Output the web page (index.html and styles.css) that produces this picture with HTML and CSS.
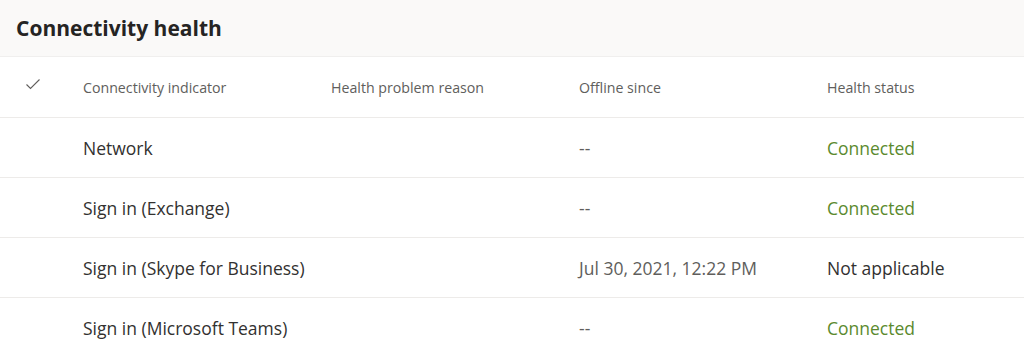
FILE: index.html
```html
<!DOCTYPE html>
<html>
<head>
<meta charset="utf-8">
<link rel="stylesheet" href="styles.css">
</head>
<body>
<div class="panel">
  <div class="title-bar"><h1 class="title">Connectivity health</h1></div>
  <div class="table">
    <div class="row head">
      <div class="cell check">
        <svg width="16" height="16" viewBox="0 0 16 16"><path d="M1.5 8.5 L5.5 12.5 L14.5 3.5" fill="none" stroke="#605e5c" stroke-width="1.1"/></svg>
      </div>
      <div class="cell">Connectivity indicator</div>
      <div class="cell">Health problem reason</div>
      <div class="cell">Offline since</div>
      <div class="cell">Health status</div>
    </div>
    <div class="row">
      <div class="cell check"></div>
      <div class="cell">Network</div>
      <div class="cell"></div>
      <div class="cell muted">--</div>
      <div class="cell ok">Connected</div>
    </div>
    <div class="row">
      <div class="cell check"></div>
      <div class="cell">Sign in (Exchange)</div>
      <div class="cell"></div>
      <div class="cell muted">--</div>
      <div class="cell ok">Connected</div>
    </div>
    <div class="row">
      <div class="cell check"></div>
      <div class="cell">Sign in (Skype for Business)</div>
      <div class="cell"></div>
      <div class="cell muted">Jul 30, 2021, 12:22 PM</div>
      <div class="cell">Not applicable</div>
    </div>
    <div class="row last">
      <div class="cell check"></div>
      <div class="cell">Sign in (Microsoft Teams)</div>
      <div class="cell"></div>
      <div class="cell muted">--</div>
      <div class="cell ok">Connected</div>
    </div>
  </div>
</div>
</body>
</html>
```
FILE: styles.css
```css
html, body {
  margin: 0;
  padding: 0;
  background: #ffffff;
  font-family: "Open Sans", "Noto Sans", sans-serif;
  color: #323130;
}
.panel {
  width: 1024px;
  height: 356px;
  overflow: hidden;
}
.title-bar {
  height: 56px;
  background: #faf9f8;
  border-bottom: 1px solid #f0efee;
  display: flex;
  align-items: center;
  padding-left: 16px;
}
.title {
  margin: 0;
  font-size: 21px;
  font-weight: 700;
  color: #252423;
}
.row {
  display: grid;
  grid-template-columns: 83px 248px 248px 248px 1fr;
  height: 59px;
  align-items: center;
  border-bottom: 1px solid #edebe9;
  font-size: 17.5px;
}
.row.head {
  height: 60px;
  font-size: 14.2px;
  color: #605e5c;
}
.row.last { border-bottom: none; }
.cell {
  white-space: nowrap;
}
.check {
  display: flex;
  justify-content: flex-start;
  padding-left: 25px;
  position: relative;
  top: -3px;
}
.muted { color: #605e5c; }
.ok { color: #5b8a2e; }
```
